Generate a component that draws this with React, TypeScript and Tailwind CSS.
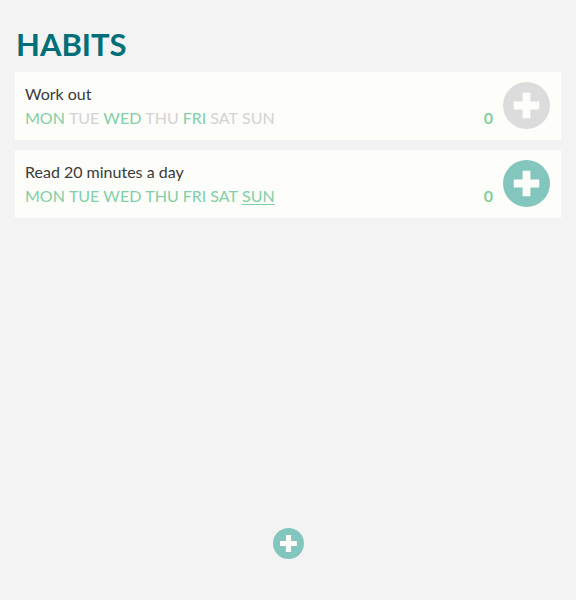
import React from "react";

const DAYS = ["MON", "TUE", "WED", "THU", "FRI", "SAT", "SUN"];

function Plus({ size, color }: { size: number; color: string }) {
  return (
    <svg width={size} height={size} viewBox="0 0 48 48">
      <circle cx="24" cy="24" r="24" fill={color} />
      <path d="M20 11h8v9h9v8h-9v9h-8v-9h-9v-8h9z" fill="#fdfdf9" />
    </svg>
  );
}

function Habit({ title, active, color }: { title: string; active: boolean[]; color: string }) {
  return (
    <div className="flex items-center bg-[#fdfdf9] h-[68px] pl-[10px] pr-[11px]">
      <div className="flex flex-col flex-1">
        <div className="text-[16px] leading-[24px] text-[#3a3a3a]">{title}</div>
        <div className="flex gap-[4px] text-[16px] leading-[24px]">
          {DAYS.map((d, i) => (
            <span
              key={d}
              className={
                (active[i] ? "text-[#82cfa6]" : "text-[#d3d3d3]") +
                (d === "SUN" && active[i] ? " underline underline-offset-2" : "")
              }
            >
              {d}
            </span>
          ))}
        </div>
      </div>
      <div className="self-end mb-[10px] mr-[10px] text-[16px] font-bold text-[#7fd09a]">0</div>
      <div className="mb-[2px]">
        <Plus size={47} color={color} />
      </div>
    </div>
  );
}

export default function App() {
  return (
    <div className="w-[576px] h-[600px] bg-[#f3f3f3] flex flex-col px-[15px] font-['Lato',sans-serif]">
      <h1 className="mt-[25px] ml-[1px] text-[31px] leading-[38px] font-bold text-[#006f79]">HABITS</h1>
      <div className="mt-[9px] flex flex-col gap-[10px]">
        <Habit title="Work out" active={[true, false, true, false, true, false, false]} color="#dcdcdc" />
        <Habit title="Read 20 minutes a day" active={[true, true, true, true, true, true, true]} color="#82c6bd" />
      </div>
      <div className="flex-1" />
      <div className="flex justify-center mb-[41px]">
        <Plus size={31} color="#82c6bd" />
      </div>
    </div>
  );
}
